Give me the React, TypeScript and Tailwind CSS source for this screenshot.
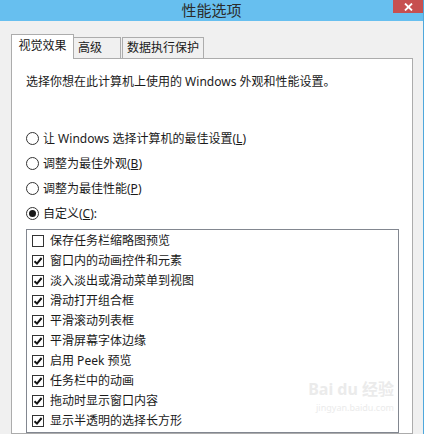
const FONT = '"Noto Sans", "Noto Sans CJK SC", sans-serif';

const effects = [
  { label: '保存任务栏缩略图预览', checked: false },
  { label: '窗口内的动画控件和元素', checked: true },
  { label: '淡入淡出或滑动菜单到视图', checked: true },
  { label: '滑动打开组合框', checked: true },
  { label: '平滑滚动列表框', checked: true },
  { label: '平滑屏幕字体边缘', checked: true },
  { label: '启用 Peek 预览', checked: true },
  { label: '任务栏中的动画', checked: true },
  { label: '拖动时显示窗口内容', checked: true },
  { label: '显示半透明的选择长方形', checked: true },
];

function Radio({ checked, children }: { checked?: boolean; children: React.ReactNode }) {
  return (
    <div className="flex h-[25px] items-center">
      <span className="flex h-[13px] w-[13px] items-center justify-center rounded-full border border-[#333]">
        {checked && <span className="h-[7px] w-[7px] rounded-full bg-[#1a1a1a]" />}
      </span>
      <span className="ml-[4px] text-[12px] text-[#1a1a1a]">{children}</span>
    </div>
  );
}

function Check({ checked, label }: { checked: boolean; label: string }) {
  return (
    <div className="flex h-[20px] items-center pl-[5px]">
      <span className="flex h-[12px] w-[12px] items-center justify-center border border-[#333] bg-white">
        {checked && (
          <svg width="10" height="10" viewBox="0 0 10 10">
            <path d="M1.5 5.2 L4 7.6 L8.6 2" fill="none" stroke="#111" strokeWidth="2" />
          </svg>
        )}
      </span>
      <span className="ml-[6px] text-[12px] text-[#1a1a1a]">{label}</span>
    </div>
  );
}

export default function App() {
  return (
    <div
      className="flex h-[434px] w-[424px] flex-col overflow-hidden border-r border-[#4fa8dc] bg-[#f0f0f0]"
      style={{ fontFamily: FONT }}
    >
      <div className="relative flex h-[21px] shrink-0 items-center justify-center bg-[#67bfef]">
        <span className="text-[15px] leading-none text-[#2b2b2b]">性能选项</span>
        <div className="absolute right-0 top-0 flex h-[13px] w-[30px] items-center justify-center bg-[#c75050]">
          <svg width="9" height="8" viewBox="0 0 9 8">
            <path d="M1 0.5 L8 7.5 M8 0.5 L1 7.5" stroke="#fff" strokeWidth="1.8" />
          </svg>
        </div>
      </div>

      <div className="flex flex-1 flex-col pl-[11px] pr-[10px] pt-[12px]">
        <div className="flex h-[25px] items-end">
          <div className="relative z-10 -mb-px flex h-[25px] w-[63px] items-center justify-center border border-b-0 border-[#acacac] bg-white pb-[2px] text-[12px] text-[#1a1a1a]">
            视觉效果
          </div>
          <div className="flex h-[21px] w-[47px] items-center border border-l-0 border-b-0 border-[#acacac] bg-[#f0f0f0] pl-[4px] text-[12px] text-[#1a1a1a]">
            高级
          </div>
          <div className="ml-px flex h-[21px] w-[82px] items-center justify-center border border-b-0 border-[#acacac] bg-[#f0f0f0] text-[12px] text-[#1a1a1a]">
            数据执行保护
          </div>
        </div>

        <div className="relative flex flex-1 flex-col border border-[#acacac] bg-white pl-[14px] pr-[13px] pt-[15px]">
          <p className="h-[16px] text-[12px] leading-[16px] text-[#1a1a1a]">
            选择你想在此计算机上使用的 Windows 外观和性能设置。
          </p>

          <div className="mt-[36px] flex flex-col">
            <Radio>
              让 Windows 选择计算机的最佳设置(<span className="underline">L</span>)
            </Radio>
            <Radio>
              调整为最佳外观(<span className="underline">B</span>)
            </Radio>
            <Radio>
              调整为最佳性能(<span className="underline">P</span>)
            </Radio>
            <Radio checked>
              自定义(<span className="underline">C</span>):
            </Radio>
          </div>

          <div className="relative mt-[3px] flex flex-1 flex-col border border-[#828790] pt-[1px]">
            {effects.map((e) => (
              <Check key={e.label} checked={e.checked} label={e.label} />
            ))}

            {/* faint site watermark in the lower right of the list */}
            <div className="pointer-events-none absolute right-[4px] top-[150px] flex flex-col items-end gap-[4px] text-[#ebebeb]">
              <span className="text-[16px] font-bold leading-[18px]">Bai du 经验</span>
              <span className="text-[9px] leading-[11px]">jingyan.baidu.com</span>
            </div>
          </div>
        </div>
      </div>
    </div>
  );
}
